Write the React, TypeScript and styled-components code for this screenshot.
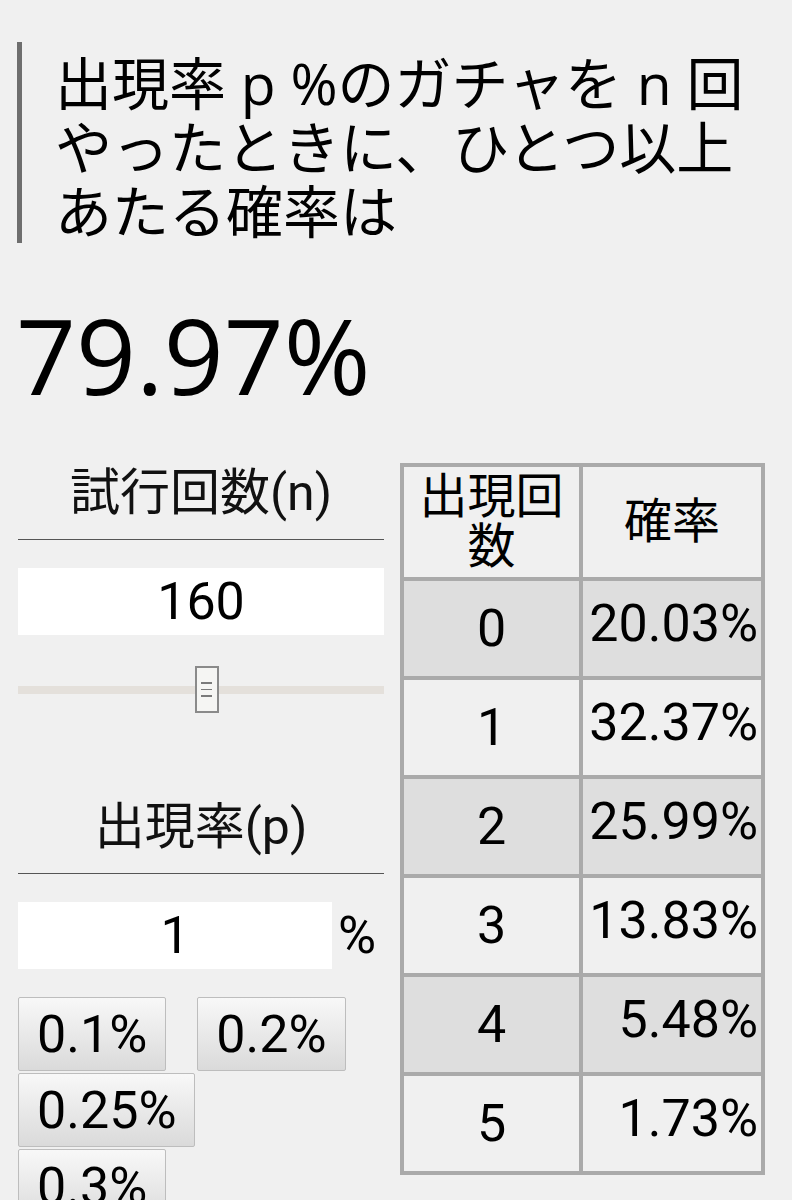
import styled, { createGlobalStyle } from "styled-components";

const TRIALS = 160;
const RATE = 1;
const SLIDER_MAX = 310;

const GlobalStyle = createGlobalStyle`
  html, body {
    margin: 0;
    padding: 0;
    background-color: #f0f0f0;
  }
  * {
    box-sizing: border-box;
  }
`;

const Page = styled.main`
  width: 792px;
  padding-top: 42px;
  color: #000;
  font-family: "Roboto", "Noto Sans CJK JP", sans-serif;
`;

const Title = styled.h1`
  margin: 0 0 0 17px;
  padding: 9px 0 0 33px;
  height: 201px;
  border-left: 5px solid #6e6e6e;
  font-family: "Open Sans", "Noto Sans CJK JP", sans-serif;
  font-size: 57px;
  line-height: 64px;
  font-weight: 400;
`;

const Result = styled.div`
  margin: 59px 0 0 16px;
  font-family: "Open Sans", sans-serif;
  font-size: 105px;
  line-height: 1;
`;

const Main = styled.section`
  display: flex;
  align-items: flex-start;
  gap: 16px;
  margin-top: 56px;
  padding-left: 18px;
`;

const Controls = styled.div`
  display: flex;
  flex-direction: column;
  width: 366px;
`;

const FieldLabel = styled.div<{ $top?: number }>`
  margin-top: ${(p) => p.$top ?? 0}px;
  padding-bottom: 16px;
  border-bottom: 1px solid #555;
  text-align: center;
  font-family: "Roboto", "Noto Sans CJK JP", sans-serif;
  font-size: 50px;
  line-height: 60px;
  color: #111;
`;

const NumberInput = styled.input<{ $width?: number }>`
  display: block;
  width: ${(p) => (p.$width ? `${p.$width}px` : "100%")};
  height: 67px;
  margin: 0;
  padding: 0;
  border: none;
  outline: none;
  background-color: #fff;
  text-align: center;
  font-family: "Roboto", sans-serif;
  font-size: 52px;
  color: #000;
`;

const Slider = styled.div`
  position: relative;
  display: flex;
  align-items: center;
  height: 47px;
  margin-top: 31px;
`;

const Track = styled.div`
  width: 100%;
  height: 8px;
  background-color: #e4e0db;
`;

const Thumb = styled.div`
  position: absolute;
  top: 0;
  width: 24px;
  height: 47px;
  display: flex;
  flex-direction: column;
  align-items: center;
  justify-content: center;
  gap: 5px;
  border: 2px solid #8a8a8a;
  background-color: #f5f5f3;
`;

const Grip = styled.span`
  width: 11px;
  height: 1.5px;
  background-color: #7a7a7a;
`;

const RateRow = styled.div`
  display: flex;
  align-items: center;
  gap: 6px;
  margin-top: 28px;
`;

const PercentMark = styled.span`
  font-family: "Roboto", sans-serif;
  font-size: 52px;
`;

const Presets = styled.div`
  display: flex;
  flex-direction: column;
  gap: 2px;
  margin-top: 28px;
`;

const PresetRow = styled.div`
  display: flex;
  gap: 31px;
`;

const PresetButton = styled.button`
  height: 74px;
  padding: 0 18px;
  border: 1px solid #bdbdbd;
  border-radius: 2px;
  background: linear-gradient(#f8f8f8, #dadada);
  font-family: "Roboto", sans-serif;
  font-size: 52px;
  color: #000;
  cursor: pointer;
`;

const ResultTable = styled.table`
  width: 365px;
  border: 4px solid #aaa;
  border-spacing: 0;
  table-layout: fixed;
`;

const HeadCell = styled.th<{ $second?: boolean }>`
  width: ${(p) => (p.$second ? "auto" : "175px")};
  height: 110px;
  padding: 5px 4px;
  border-left: ${(p) => (p.$second ? "4px solid #aaa" : "none")};
  font-family: "Roboto", "Noto Sans CJK JP", sans-serif;
  font-size: 48px;
  line-height: 50px;
  font-weight: 400;
  text-align: center;
  vertical-align: middle;
`;

const Row = styled.tr<{ $shaded: boolean }>`
  background-color: ${(p) => (p.$shaded ? "#dedede" : "transparent")};
`;

const CountCell = styled.td`
  height: 99px;
  padding: 0;
  border-top: 4px solid #aaa;
  text-align: center;
  font-family: "Roboto", sans-serif;
  font-size: 52px;
`;

const ProbCell = styled.td`
  height: 99px;
  padding: 0 3px 11px 0;
  border-top: 4px solid #aaa;
  border-left: 4px solid #aaa;
  text-align: right;
  font-family: "Roboto", sans-serif;
  font-size: 52px;
`;

const binomial = (n: number, k: number, p: number) => {
  let c = 1;
  for (let i = 0; i < k; i++) c = (c * (n - i)) / (i + 1);
  return c * Math.pow(p, k) * Math.pow(1 - p, n - k);
};

const presetRows = [["0.1%", "0.2%"], ["0.25%"], ["0.3%"], ["0.5%"]];

const App = () => {
  const p = RATE / 100;
  const atLeastOne = (1 - Math.pow(1 - p, TRIALS)) * 100;
  const rows = [0, 1, 2, 3, 4, 5].map((k) => binomial(TRIALS, k, p) * 100);
  const thumbLeft = (TRIALS / SLIDER_MAX) * (366 - 24);

  return (
    <>
      <GlobalStyle />
      <Page>
        <Title>
          出現率 p %のガチャを n 回
          <br />
          やったときに、ひとつ以上
          <br />
          あたる確率は
        </Title>
        <Result>{atLeastOne.toFixed(2)}%</Result>
        <Main>
          <Controls>
            <FieldLabel>試行回数(n)</FieldLabel>
            <RateRow>
              <NumberInput defaultValue={TRIALS} />
            </RateRow>
            <Slider>
              <Track />
              <Thumb style={{ left: thumbLeft }}>
                <Grip />
                <Grip />
                <Grip />
              </Thumb>
            </Slider>
            <FieldLabel $top={84}>出現率(p)</FieldLabel>
            <RateRow>
              <NumberInput $width={314} defaultValue={RATE} />
              <PercentMark>%</PercentMark>
            </RateRow>
            <Presets>
              {presetRows.map((row, i) => (
                <PresetRow key={i}>
                  {row.map((label) => (
                    <PresetButton key={label}>{label}</PresetButton>
                  ))}
                </PresetRow>
              ))}
            </Presets>
          </Controls>
          <ResultTable>
            <thead>
              <tr>
                <HeadCell>出現回数</HeadCell>
                <HeadCell $second>確率</HeadCell>
              </tr>
            </thead>
            <tbody>
              {rows.map((value, k) => (
                <Row key={k} $shaded={k % 2 === 0}>
                  <CountCell>{k}</CountCell>
                  <ProbCell>{value.toFixed(2)}%</ProbCell>
                </Row>
              ))}
            </tbody>
          </ResultTable>
        </Main>
      </Page>
    </>
  );
};

export default App;
